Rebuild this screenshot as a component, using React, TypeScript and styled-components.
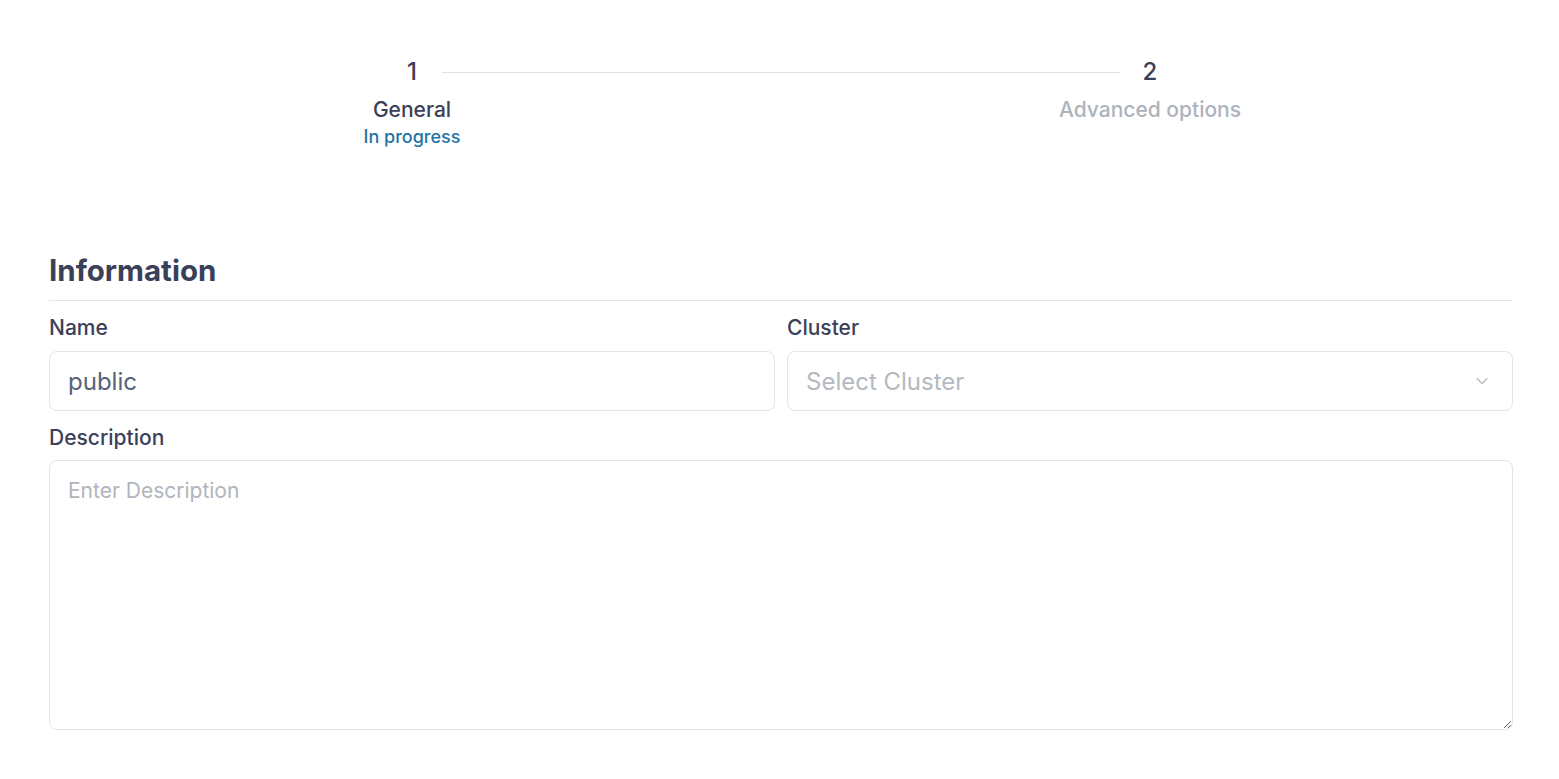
import React from 'react';
import styled, { createGlobalStyle } from 'styled-components';
import { ChevronDown } from 'lucide-react';

const GlobalStyle = createGlobalStyle`
  * { box-sizing: border-box; }
  body {
    margin: 0;
    background: #ffffff;
    font-family: Inter, 'Noto Sans', sans-serif;
    color: #3b4059;
  }
`;

const Page = styled.div`
  padding: 57px 46px 40px 49px;
`;

const Stepper = styled.div`
  display: grid;
  grid-template-columns: 1fr 1fr;
  margin: -1px -6px 0;
`;

const Step = styled.div<{ $connect?: boolean }>`
  position: relative;
  display: flex;
  flex-direction: column;
  align-items: center;

  ${(p) =>
    p.$connect &&
    `
    &::after {
      content: '';
      position: absolute;
      top: 16px;
      left: calc(50% + 30px);
      width: calc(100% - 60px);
      height: 1px;
      background: #dfe2e6;
    }
  `}
`;

const StepNumber = styled.div`
  padding-top: 1px;
  font-size: 24px;
  line-height: 30px;
  font-weight: 500;
  color: #3b4059;
`;

const StepTitle = styled.div<{ $muted?: boolean }>`
  margin-top: 10px;
  font-size: 21px;
  line-height: 26px;
  font-weight: 500;
  color: ${(p) => (p.$muted ? '#adb3bc' : '#3b4059')};
`;

const StepStatus = styled.div`
  margin-top: 3px;
  font-size: 18px;
  line-height: 22px;
  font-weight: 500;
  color: #1f74a3;
`;

const SectionTitle = styled.h2`
  margin: 104px 0 0;
  padding-bottom: 12px;
  border-bottom: 1px solid #e3e5e8;
  font-size: 29.5px;
  line-height: 36px;
  font-weight: 700;
  color: #3b4059;
`;

const Row = styled.div`
  display: grid;
  grid-template-columns: 1fr 1fr;
  gap: 12px;
`;

const Field = styled.div`
  display: flex;
  flex-direction: column;
  margin-top: 15px;
`;

const Label = styled.label`
  font-size: 21px;
  line-height: 24px;
  font-weight: 500;
  color: #3b4059;
  margin-bottom: 11px;
`;

const Input = styled.input`
  height: 60px;
  padding: 0 18px;
  border: 1px solid #e2e4e8;
  border-radius: 8px;
  font-family: inherit;
  font-size: 24px;
  color: #56627a;
  outline: none;
`;

const SelectBox = styled.div`
  height: 60px;
  padding: 0 20px 0 18px;
  border: 1px solid #e2e4e8;
  border-radius: 8px;
  display: flex;
  align-items: center;
  justify-content: space-between;
  font-size: 24px;
  color: #b4b9c1;
`;

const TextArea = styled.textarea`
  height: 270px;
  margin-top: -1px;
  padding: 17px 18px;
  border: 1px solid #e2e4e8;
  border-radius: 8px;
  font-family: inherit;
  font-size: 21px;
  line-height: 26px;
  color: #56627a;
  outline: none;
  resize: vertical;

  &::placeholder {
    color: #b0b5bd;
  }
`;

export default function App() {
  return (
    <Page>
      <GlobalStyle />
      <Stepper>
        <Step $connect>
          <StepNumber>1</StepNumber>
          <StepTitle>General</StepTitle>
          <StepStatus>In progress</StepStatus>
        </Step>
        <Step>
          <StepNumber>2</StepNumber>
          <StepTitle $muted>Advanced options</StepTitle>
        </Step>
      </Stepper>

      <SectionTitle>Information</SectionTitle>

      <Row>
        <Field>
          <Label>Name</Label>
          <Input defaultValue="public" />
        </Field>
        <Field>
          <Label>Cluster</Label>
          <SelectBox>
            <span>Select Cluster</span>
            <ChevronDown size={20} strokeWidth={1.5} color="#b4b9c1" />
          </SelectBox>
        </Field>
      </Row>

      <Field>
        <Label>Description</Label>
        <TextArea placeholder="Enter Description" />
      </Field>
    </Page>
  );
}
